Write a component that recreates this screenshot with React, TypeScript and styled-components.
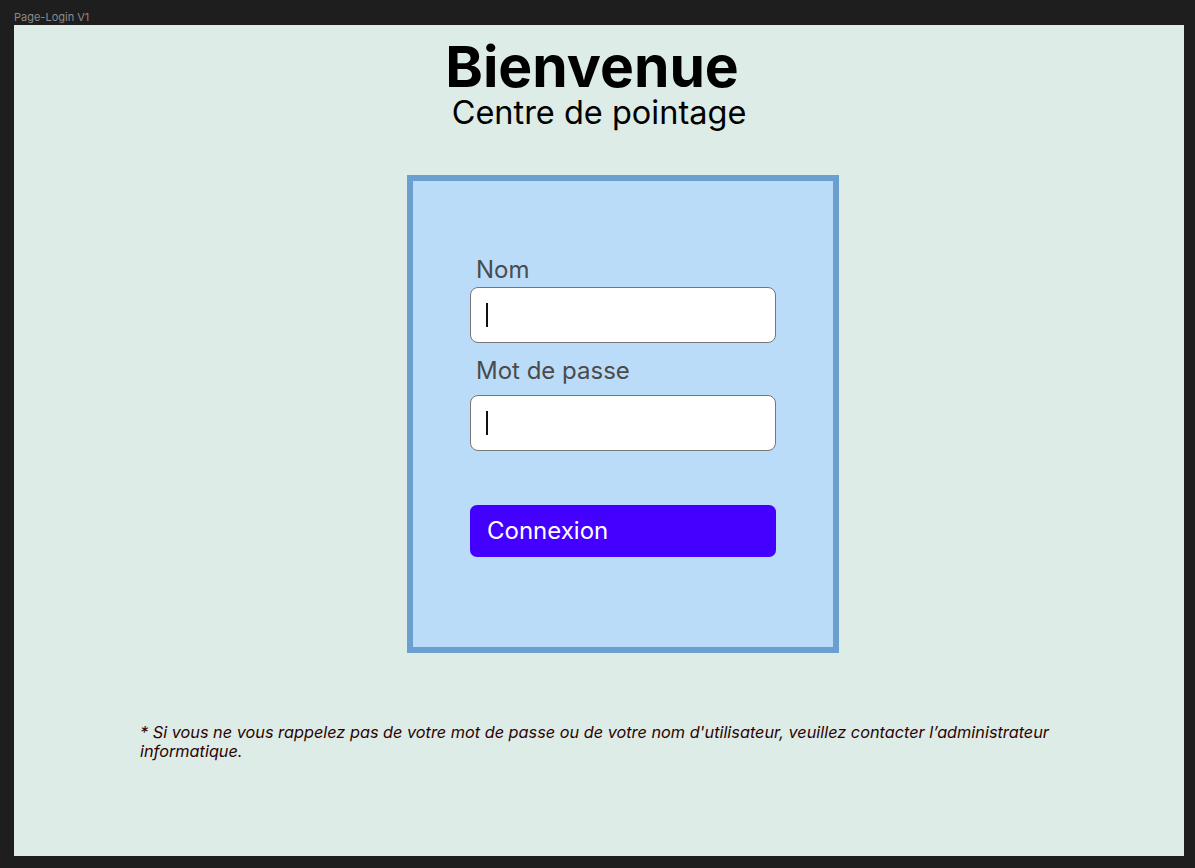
import React from "react";
import styled, { createGlobalStyle } from "styled-components";

const Global = createGlobalStyle`
  html, body { margin: 0; padding: 0; background: #1e1e1e; }
  body { font-family: Inter, "Noto Sans", sans-serif; }
  * { box-sizing: border-box; }
`;

const Canvas = styled.div`
  width: 1195px;
  height: 868px;
  padding: 10px 0 0 14px;
  background: #1e1e1e;
`;

const FrameLabel = styled.div`
  font-size: 11px;
  line-height: 15px;
  color: #8a8a8a;
  font-family: Inter, sans-serif;
`;

const Frame = styled.main`
  width: 1170px;
  height: 831px;
  background: #ddece6;
  display: flex;
  flex-direction: column;
  padding-top: 13px;
`;

const Title = styled.h1`
  margin: 0 14px 0 0;
  text-align: center;
  font-size: 57px;
  font-weight: 700;
  line-height: 58px;
  color: #000;
`;

const Subtitle = styled.h2`
  margin: 0;
  text-align: center;
  font-size: 32.5px;
  font-weight: 400;
  line-height: 34px;
  color: #000;
`;

const Card = styled.section`
  margin: 45px 0 0 393px;
  width: 432px;
  height: 478px;
  background: #badcf8;
  border: 6px solid #6b9fd0;
  padding: 75px 0 0 57px;
  display: flex;
  flex-direction: column;
`;

const Label = styled.label<{ $mt?: number }>`
  display: block;
  margin: ${(p) => p.$mt ?? 0}px 0 0 6px;
  font-size: 24px;
  line-height: 28px;
  color: #4b4b4b;
`;

const Field = styled.div<{ $mt?: number }>`
  margin-top: ${(p) => p.$mt ?? 0}px;
  width: 306px;
  height: 56px;
  background: #fff;
  border: 1px solid #767676;
  border-radius: 8px;
  display: flex;
  align-items: center;
  padding-left: 15px;
`;

const Caret = styled.span`
  width: 2px;
  height: 24px;
  background: #111;
`;

const Button = styled.button`
  margin-top: 54px;
  width: 306px;
  height: 52px;
  border: none;
  border-radius: 7px;
  background: #4400ff;
  color: #fff;
  font-family: Inter, sans-serif;
  font-size: 24px;
  text-align: left;
  padding: 0 0 2px 17px;
  cursor: pointer;
`;

const Note = styled.p`
  margin: 70px 0 0 126px;
  width: 940px;
  font-size: 16.3px;
  line-height: 19px;
  font-style: italic;
  color: #2e0303;
`;

export default function App() {
  return (
    <>
      <Global />
      <Canvas>
        <FrameLabel>Page-Login V1</FrameLabel>
        <Frame>
          <Title>Bienvenue</Title>
          <Subtitle>Centre de pointage</Subtitle>
          <Card>
            <Label>Nom</Label>
            <Field $mt={3}>
              <Caret />
            </Field>
            <Label $mt={14}>Mot de passe</Label>
            <Field $mt={10}>
              <Caret />
            </Field>
            <Button>Connexion</Button>
          </Card>
          <Note>
            * Si vous ne vous rappelez pas de votre mot de passe ou de votre nom
            d'utilisateur, veuillez contacter l’administrateur informatique.
          </Note>
        </Frame>
      </Canvas>
    </>
  );
}
